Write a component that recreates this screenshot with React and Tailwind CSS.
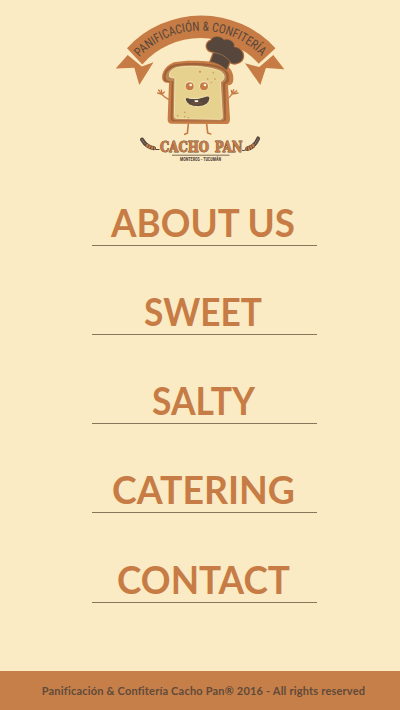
const NAV_ITEMS = [
  { label: "ABOUT US", width: 184 },
  { label: "SWEET", width: 118 },
  { label: "SALTY", width: 103 },
  { label: "CATERING", width: 183 },
  { label: "CONTACT", width: 173 },
];

function Wheat() {
  return (
    <>
      <path d="M19 11.5 Q15 12.5 12 9.5" fill="none" stroke="#57463b" strokeWidth="1" />
      <path d="M1.5 1.5 Q4 6 7.5 8 Q10 9.6 13.5 10.2" fill="none" stroke="#57463b" strokeWidth="4" strokeLinecap="round" />
      <path d="M6 7 Q10 9.8 14.5 10.4" fill="none" stroke="#c67c44" strokeWidth="3.2" strokeDasharray="1.9 .8" />
      <path d="M1.3 1.5 Q3.5 5 6 6.7" fill="none" stroke="#94877a" strokeWidth="1.2" strokeDasharray="1.2 .9" />
    </>
  );
}

function Logo() {
  return (
    <svg className="block h-[155px] w-[175px]" viewBox="115 10 175 155" role="img" aria-label="Cacho Pan">
      <defs>
        <path id="banner-text" d="M139.4 57.2 A84.5 84.5 0 0 1 263.2 58" />
      </defs>
      <g fill="#c67c44">
        <path d="M127 48.2 A100.6 100.6 0 0 1 275.5 48.2 L258.7 63.8 A78 78 0 0 0 142.3 64.4 Z" />
        <path d="M127.7 55 L141.8 66.5 L153.5 62.3 L139.3 85 L134.3 67.8 L115.7 68.6 Z" />
        <path d="M273.3 55 L284.3 69.2 L265.9 68 L260.3 85 L245 63.3 L259.3 67 Z" />
      </g>
      <text className="font-['Roboto_Condensed','Liberation_Sans_Narrow','Liberation_Sans',sans-serif]" fontSize="12.6" fill="#57463b" textLength="136" lengthAdjust="spacingAndGlyphs">
        <textPath href="#banner-text" textLength="136" lengthAdjust="spacingAndGlyphs">PANIFICACIÓN &amp; CONFITERÍA</textPath>
      </text>

      <g transform="translate(150 35) scale(.33333)" strokeLinecap="round" strokeLinejoin="round">
        <g fill="none" stroke="#c67c44" strokeWidth="4">
          <path d="M59 195 Q48 191 35 178 M35 178 L23 174 M35 178 L26 165 M36 178 L34 165 M36 178 L43 171" />
          <path d="M228 194 Q241 187 246 177 M246 177 L244 166 M246 177 L251 164 M247 177 L260 167 M247 177 L264 174" />
          <path d="M115 267 L112 295 L104 298 M170 267 L173 294 L182 297" strokeWidth="5" />
        </g>
        <path d="M40 139 C29 124 42 93 72 82 C110 74 190 76 226 91 C247 100 253 124 249 141 C246 149 237 151 234 151 L240 252 Q240 268 228 267 L66 266 Q52 266 53 252 L57 143 Q47 145 40 139 Z" fill="#c67c44" />
        <path d="M41 134 C38 109 54 92 76 88 C112 82 184 82 217 97 C235 105 241 122 236 141 L226 148 L228 250 Q228 259 219 259 L73 259 Q61 259 62 248 L65 140 Q48 145 41 134 Z" fill="#a1623a" />
        <path d="M48 133 C43 116 57 100 78 94 C118 86 185 89 216 104 C233 114 234 139 218 143 L223 248 Q223 257 214 257 L78 256 Q67 256 68 247 L70 138 Q55 142 48 133 Z" fill="#bd8655" />
        <path d="M59 125 C54 110 69 100 84 97 C119 91 179 94 211 109 C227 118 225 137 211 139 L217 246 Q217 253 209 253 L81 250 Q72 250 73 242 L75 128 Q65 131 59 125 Z" fill="#e6d18e" stroke="#efe0ab" strokeWidth="3" />
        <g>
          <circle cx="119" cy="153" r="14" fill="#f7edcc" />
          <circle cx="162" cy="153" r="14" fill="#f7edcc" />
          <circle cx="119" cy="154" r="12" fill="#c67c44" />
          <circle cx="162" cy="154" r="12" fill="#c67c44" />
          <circle cx="122" cy="150" r="4" fill="#fff7e5" />
          <circle cx="165" cy="150" r="4" fill="#fff7e5" />
        </g>
        <path d="M105 193 Q108 184 119 190 Q142 194 164 185 Q178 179 180 190 Q176 214 145 215 Q112 216 105 193 Z" fill="#57463b" stroke="#f3e4af" strokeWidth="3" />
        <path d="M120 204 Q142 196 162 203 Q143 217 120 204 Z" fill="#6b4d3f" />
        <path d="M133 196 L145 196 L144 201 L135 201 Z" fill="#fff8e9" />
        <g fill="#c9904e">
          <circle cx="150" cy="110" r="3" />
          <circle cx="190" cy="113" r="2.3" />
          <circle cx="173" cy="132" r="2.3" />
          <circle cx="195" cy="132" r="2.3" />
          <circle cx="184" cy="143" r="1.8" />
          <circle cx="104" cy="232" r="2.3" />
          <circle cx="83" cy="242" r="2.3" />
          <circle cx="104" cy="245" r="2" />
          <circle cx="115" cy="248" r="2.3" />
        </g>
        <path d="M181 80 L192 51 C164 50 164 21 184 16 C184 4 212 0 222 15 C239 9 256 23 252 36 C285 39 290 81 258 85 C251 88 244 84 239 80 L230 105 Q209 84 181 80 Z" fill="#57463b" stroke="#c67c44" strokeWidth="7" />
        <path d="M181 80 L192 51 C164 50 164 21 184 16 C184 4 212 0 222 15 C239 9 256 23 252 36 C285 39 290 81 258 85 C251 88 244 84 239 80 L230 105 Q209 84 181 80 Z" fill="#57463b" stroke="#8b5d3f" strokeWidth="2" />
        <path d="M193 53 Q220 55 240 79" fill="none" stroke="#b07b52" strokeWidth="2" />
      </g>

      <text
        x="160"
        y="151.8"
        className="font-['DejaVu_Serif',serif] font-bold [paint-order:stroke] [word-spacing:2px]"
        fontSize="14"
        fill="#c67c44"
        stroke="#6b4a38"
        strokeWidth=".9"
        textLength="82.5"
        lengthAdjust="spacingAndGlyphs"
      >
        CACHO PAN
      </text>
      <g transform="translate(140.5 138)"><Wheat /></g>
      <g transform="translate(259.5 137) scale(-.92 1.15)"><Wheat /></g>
      <path d="M172 155.2 H229.5" stroke="#7b6852" strokeWidth="1" />
      <text x="180" y="161.2" className="font-['Roboto_Condensed','Liberation_Sans_Narrow','Liberation_Sans',sans-serif] font-bold" fontSize="5.2" fill="#57463b" textLength="41" lengthAdjust="spacingAndGlyphs">MONTEROS - TUCUMÁN</text>
    </svg>
  );
}

function NavLabel({ label, width }) {
  return (
    <svg className="block h-[37px] overflow-visible" width={width} height="37">
      <text x="0" y="33.8" className="font-['Lato','Open_Sans',sans-serif] font-bold" fontSize="38" fill="#c67c44" textLength={width} lengthAdjust="spacingAndGlyphs">
        {label}
      </text>
    </svg>
  );
}

export default function App() {
  return (
    <div className="flex h-[710px] w-[400px] flex-col overflow-hidden bg-[#faebc4]">
      <header className="flex justify-center pt-[10px] pl-[5px]">
        <Logo />
      </header>
      <nav className="mt-[37.5px] ml-[92px] flex w-[225px] flex-col">
        {NAV_ITEMS.map((item) => (
          <a key={item.label} href="#" className="mb-[46.25px] flex h-[43px] justify-center border-b border-[#85775c] pr-[3px]">
            <NavLabel label={item.label} width={item.width} />
          </a>
        ))}
      </nav>
      <footer className="mt-auto flex h-[39px] items-center justify-center bg-[#c67f48] pt-[2px] pl-[7px]">
        <p className="font-['Lato','Open_Sans',sans-serif] text-[11px] font-bold tracking-[0.2px] whitespace-nowrap text-[#5f4a3b]">
          Panificación &amp; Confitería Cacho Pan® 2016 - All rights reserved
        </p>
      </footer>
    </div>
  );
}
